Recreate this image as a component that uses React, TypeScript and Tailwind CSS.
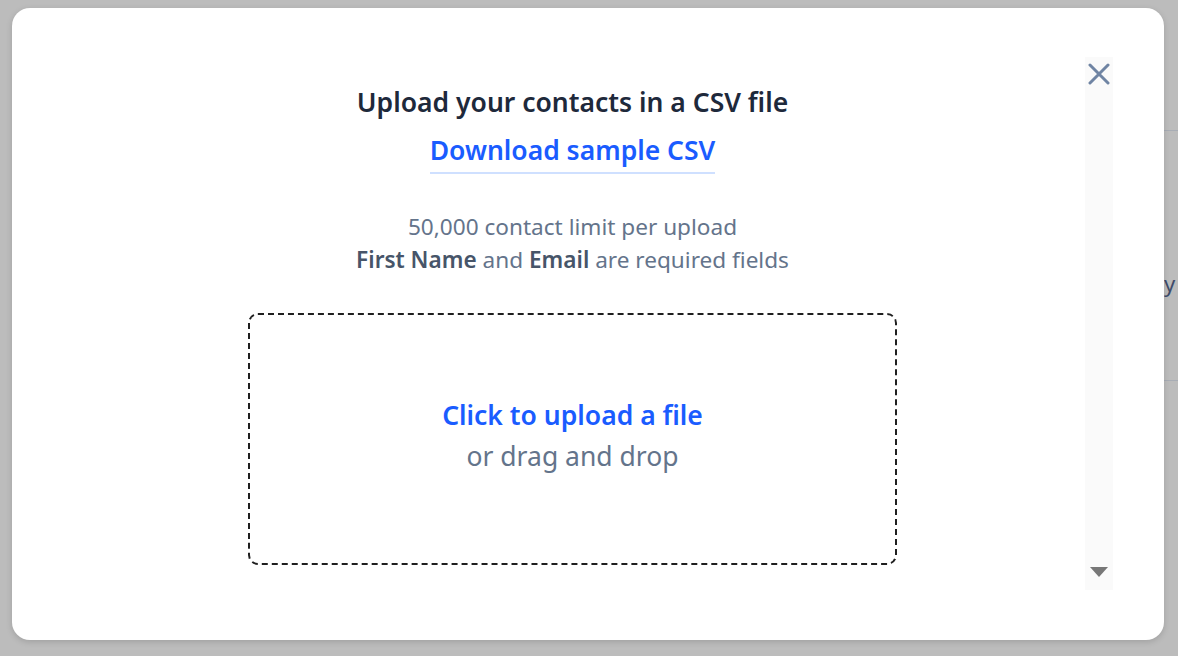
import React from 'react';

const FONT = { fontFamily: '"Noto Sans", "Open Sans", sans-serif' };

const CloseIcon: React.FC = () => (
  <svg width="24" height="22" viewBox="0 0 24 22" fill="none" stroke="#6f84a3" strokeWidth={3} strokeLinecap="round">
    <path d="M3 2l18 18M21 2L3 20" />
  </svg>
);

export default function App() {
  return (
    <div className="relative h-[656px] w-full overflow-hidden bg-[#bcbcbc]" style={FONT}>
      {/* page behind the overlay */}
      <div className="flex flex-col items-end pt-[130px]">
        <div className="w-[14px] border-t border-[#a8adb5]" />
        <div className="mt-[137px] w-[14px] text-[22px] leading-[30px] text-[#3f4c6b]">y</div>
        <div className="mt-[82px] w-[14px] border-t border-[#a8adb5]" />
      </div>

      {/* modal */}
      <div className="absolute left-3 top-2 flex h-[632px] w-[1152px] rounded-[18px] bg-white shadow-[0_2px_6px_rgba(0,0,0,0.15)]">
        <div className="flex flex-1 flex-col items-center pl-12 pt-[77px]">
          <h2 className="text-[26.5px] font-semibold leading-[34px] text-[#1e293b]">
            Upload your contacts in a CSV file
          </h2>
          <a className="mt-[14px] border-b-2 border-[#cfe0ff] pb-[5px] text-[26.5px] font-semibold leading-[34px] text-[#1a5cff]">
            Download sample CSV
          </a>
          <div className="mt-[36px] text-center text-[22.6px] leading-[33px] text-[#64748b]">
            <p>50,000 contact limit per upload</p>
            <p>
              <span className="font-semibold text-[#475569]">First Name</span> and{' '}
              <span className="font-semibold text-[#475569]">Email</span> are required fields
            </p>
          </div>
          <div className="mt-[37px] flex h-[252px] w-[649px] flex-col items-center justify-center rounded-[10px] border-2 border-dashed border-[#1f1f1f] pb-[6px]">
            <span className="text-[26.5px] font-semibold leading-[41px] text-[#1a5cff]">Click to upload a file</span>
            <span className="text-[26.5px] leading-[41px] text-[#64748b]">or drag and drop</span>
          </div>
        </div>

        <div className="mt-[49px] flex h-[533px] w-[28px] flex-col items-center justify-between bg-[#fafafa] pb-[13px] pt-[6px]">
          <CloseIcon />
          <div className="h-0 w-0 border-x-[9px] border-t-[10px] border-x-transparent border-t-[#777777]" />
        </div>
        <div className="w-[51px]" />
      </div>
    </div>
  );
}
